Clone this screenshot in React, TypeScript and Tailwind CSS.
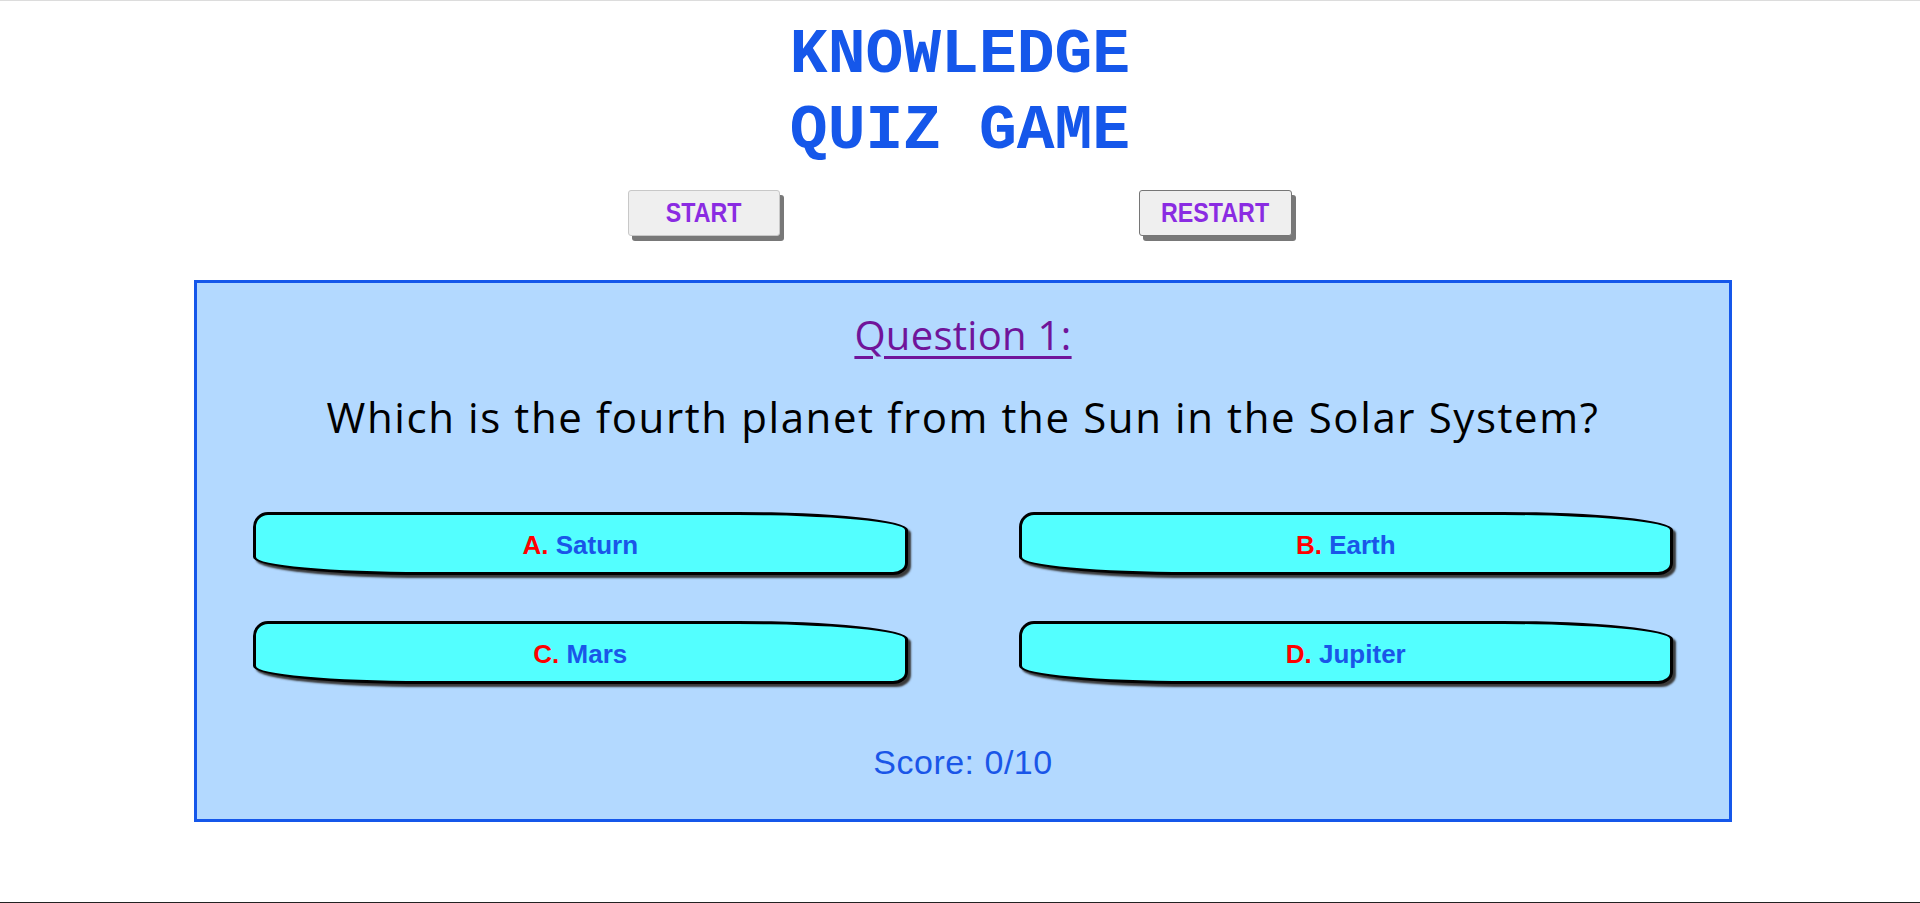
import React from "react";

const answers = [
  { letter: "A", text: "Saturn" },
  { letter: "B", text: "Earth" },
  { letter: "C", text: "Mars" },
  { letter: "D", text: "Jupiter" },
];

export default function App() {
  return (
    <div className="h-[903px] box-border bg-white border-t border-t-[#dcdcdc] border-b border-b-[#222] flex flex-col items-center">
      <h1 className="mt-[17px] w-[400px] text-center font-['Liberation_Mono',monospace] font-bold text-[63px] leading-[76px] text-[#1557ea]">
        KNOWLEDGE QUIZ GAME
      </h1>

      <div className="mt-[20px] flex justify-center gap-[359px]">
        <button className="w-[152px] h-[46px] box-border bg-[#efefef] border border-[#c8c8c8] rounded-[3px] shadow-[4px_5px_0_#787878] font-['Liberation_Sans',Arial,sans-serif] font-bold text-[28px] leading-none text-[#8a2be2]">
          <span className="inline-block scale-x-[0.83]">START</span>
        </button>
        <button className="w-[153px] h-[46px] box-border bg-[#efefef] border border-[#767676] rounded-[3px] shadow-[4px_5px_0_#787878] font-['Liberation_Sans',Arial,sans-serif] font-bold text-[28px] leading-none text-[#8a2be2]">
          <span className="inline-block scale-x-[0.83]">RESTART</span>
        </button>
      </div>

      <div className="mt-[44px] ml-[6px] w-[1538px] h-[542px] box-border border-[3px] border-[#1557ea] bg-[#b3d9ff] flex flex-col items-center">
        <h2 className="mt-[28px] font-['Comic_Sans_MS','Open_Sans',sans-serif] font-medium text-[40px] leading-[48px] tracking-[0.3px] text-[#70149a] underline decoration-[3px] underline-offset-[6px]">
          Question 1:
        </h2>
        <p className="mt-[34px] font-['Comic_Sans_MS','Open_Sans',sans-serif] text-[42px] leading-[48px] tracking-[1.6px] text-black">
          Which is the fourth planet from the Sun in the Solar System?
        </p>

        <div className="mt-[71px] w-full box-border px-[56px] grid grid-cols-2 gap-x-[111px] gap-y-[46px]">
          {answers.map((a) => (
            <button
              key={a.letter}
              className="h-[63px] box-border pt-[3px] bg-[#53ffff] border-[3px] border-black rounded-[15px_170px_15px_170px/15px_18px_12px_18px] shadow-[3px_3px_2px_#3a3a3a] font-['Liberation_Sans',Arial,sans-serif] font-bold text-[26px] leading-none"
            >
              <span className="text-[#ff0000]">{a.letter}.</span>{" "}
              <span className="text-[#1a56e8]">{a.text}</span>
            </button>
          ))}
        </div>

        <div className="mt-[58px] font-['Liberation_Sans',Arial,sans-serif] text-[34px] leading-[40px] tracking-[0.5px] text-[#1a56e8]">
          Score: 0/10
        </div>
      </div>
    </div>
  );
}
